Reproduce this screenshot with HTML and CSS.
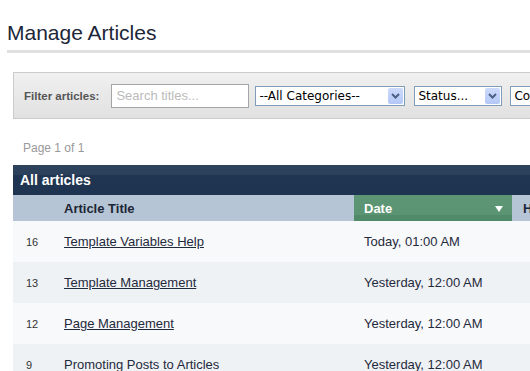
FILE: index.html
```html
<!DOCTYPE html>
<html lang="en">
<head>
  <meta charset="UTF-8">
  <title>Manage Articles</title>
  <link rel="stylesheet" href="styles.css">
</head>
<body>
  <h1 class="titulo">Manage Articles</h1>

  <div class="contenido">
    <div class="filtros">
      <span class="filtros-label">Filter articles:</span>
      <input class="buscar" type="text" placeholder="Search titles...">
      <div class="combo combo-cat">
        <span class="combo-texto">--All Categories--</span>
        <span class="combo-btn"><svg width="9" height="6" viewBox="0 0 9 6"><path d="M1 1 L4.5 4.5 L8 1" fill="none" stroke="#4d6185" stroke-width="2"/></svg></span>
      </div>
      <div class="combo combo-status">
        <span class="combo-texto">Status...</span>
        <span class="combo-btn"><svg width="9" height="6" viewBox="0 0 9 6"><path d="M1 1 L4.5 4.5 L8 1" fill="none" stroke="#4d6185" stroke-width="2"/></svg></span>
      </div>
      <div class="combo combo-otro">
        <span class="combo-texto">Co</span>
      </div>
    </div>

    <p class="paginas">Page 1 of 1</p>

    <table class="articulos">
      <colgroup>
        <col class="c-id">
        <col class="c-titulo">
        <col class="c-fecha">
        <col class="c-hits">
      </colgroup>
      <thead>
        <tr class="barra">
          <th colspan="4">All articles</th>
        </tr>
        <tr class="columnas">
          <th class="col-id"></th>
          <th class="col-titulo">Article Title</th>
          <th class="col-fecha activa">Date <span class="flecha"></span></th>
          <th class="col-hits">H</th>
        </tr>
      </thead>
      <tbody>
        <tr>
          <td class="col-id">16</td>
          <td class="col-titulo"><a href="#">Template Variables Help</a></td>
          <td class="col-fecha">Today, 01:00 AM</td>
          <td class="col-hits"></td>
        </tr>
        <tr class="par">
          <td class="col-id">13</td>
          <td class="col-titulo"><a href="#">Template Management</a></td>
          <td class="col-fecha">Yesterday, 12:00 AM</td>
          <td class="col-hits"></td>
        </tr>
        <tr>
          <td class="col-id">12</td>
          <td class="col-titulo"><a href="#">Page Management</a></td>
          <td class="col-fecha">Yesterday, 12:00 AM</td>
          <td class="col-hits"></td>
        </tr>
        <tr class="par">
          <td class="col-id">9</td>
          <td class="col-titulo">Promoting Posts to Articles</td>
          <td class="col-fecha">Yesterday, 12:00 AM</td>
          <td class="col-hits"></td>
        </tr>
      </tbody>
    </table>
  </div>
</body>
</html>
```

FILE: styles.css
```css
html {
  overflow: hidden;
}
body {
  font-family: "Liberation Sans", Arial, sans-serif;
  margin: 0;
  padding: 0 0 0 7px;
  background-color: #fff;
  color: #1f2a3c;
  width: 530px;
}
.titulo {
  font-size: 21px;
  font-weight: normal;
  color: #1c2638;
  margin: 0;
  padding: 23px 0 7px 0;
  line-height: 20px;
  width: 523px;
  border-bottom: 3px solid #e0e0e0;
}
.contenido {
  padding-left: 6px;
}
.filtros {
  display: flex;
  align-items: center;
  margin-top: 19px;
  height: 45px;
  border: 1px solid #cbcbcb;
  border-right: none;
  background: linear-gradient(#f0f0f0, #e1e1e1);
  overflow: hidden;
}
.filtros-label {
  font-size: 11.5px;
  font-weight: bold;
  color: #555;
  margin: 0 12px 0 10px;
  white-space: nowrap;
}
.buscar {
  box-sizing: border-box;
  flex-shrink: 0;
  width: 138px;
  height: 24px;
  margin: 0;
  border: 1px solid #a5a5a5;
  padding: 0 4px;
  font-family: "Liberation Sans", Arial, sans-serif;
  font-size: 13px;
  background: #fff;
  outline: none;
}
.buscar::placeholder {
  color: #bbb;
}
.combo {
  box-sizing: border-box;
  flex-shrink: 0;
  display: flex;
  align-items: center;
  height: 20px;
  border: 1px solid #7f9db9;
  background: #fff;
  margin-left: 6px;
  padding: 1px;
  font-family: "DejaVu Sans", Tahoma, sans-serif;
  font-size: 12px;
  color: #000;
}
.combo-texto {
  flex-grow: 1;
  padding-left: 2px;
  white-space: nowrap;
  overflow: hidden;
}
.combo-btn {
  display: flex;
  align-items: center;
  justify-content: center;
  width: 15px;
  height: 16px;
  background: linear-gradient(#cddafc, #b4c8f6);
  border-radius: 2px;
}
.combo-cat {
  width: 150px;
}
.combo-status {
  width: 88px;
  margin-left: 9px;
}
.combo-otro {
  width: 60px;
  margin-left: 8px;
}
.paginas {
  font-size: 12px;
  color: #999;
  margin: 22px 0 0 10px;
  line-height: 14px;
}
.articulos {
  border-collapse: collapse;
  margin-top: 10px;
  width: 530px;
  table-layout: fixed;
  font-size: 13px;
}
.c-id {
  width: 41px;
}
.c-titulo {
  width: 300px;
}
.c-fecha {
  width: 158px;
}
.barra th {
  height: 30px;
  padding: 0 0 0 7px;
  text-align: left;
  color: #fff;
  font-size: 14px;
  background: linear-gradient(#2d425d 0%, #2b405b 33%, #1f3552 34%, #1e3451 100%);
}
.columnas th {
  height: 26px;
  padding: 0;
  text-align: left;
  color: #1d2636;
  font-size: 13px;
  background-color: #b5c5d5;
}
.columnas th.activa {
  color: #fff;
  position: relative;
  background: linear-gradient(#5c9674 0%, #5a9472 75%, #4f8b68 76%, #4f8b68 100%);
}
.flecha {
  position: absolute;
  right: 9px;
  top: 11px;
  border-left: 4px solid transparent;
  border-right: 4px solid transparent;
  border-top: 6px solid #fff;
}
.col-id {
  padding-left: 13px !important;
  font-size: 11px;
  color: #333;
}
.col-titulo {
  padding-left: 10px !important;
}
.col-fecha {
  padding-left: 10px !important;
}
.col-hits {
  padding-left: 11px !important;
  white-space: nowrap;
}
tbody td {
  height: 41px;
  padding: 0;
  background-color: #f8f9fb;
  color: #1f2a3c;
}
tbody tr.par td {
  background-color: #eff2f5;
}
tbody a {
  color: #1f2a3c;
}
```
